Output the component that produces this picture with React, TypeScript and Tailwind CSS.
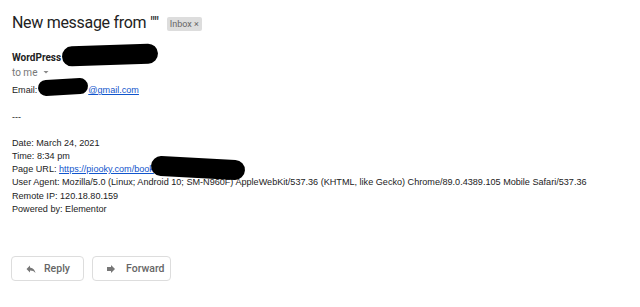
const Blot = ({ className }: { className: string }) => (
  <span className={`absolute bg-black rounded-full ${className}`} />
);

const App = () => {
  return (
    <div className="w-[640px] h-[307px] bg-white pl-[12px] pt-[11px] text-[#222]" style={{ fontFamily: 'Roboto, "Liberation Sans", sans-serif' }}>
      <div className="flex items-center h-[24px] gap-[8px]">
        <h1 className="text-[16px] tracking-[-0.3px] leading-[24px] text-[#222]">New message from ""</h1>
        <span className="bg-[#ddd] rounded-[2px] px-[3px] h-[14px] leading-[14px] text-[9px] text-[#666] mt-[1px]">
          Inbox <span className="text-[#666]">×</span>
        </span>
      </div>

      <div className="mt-[15px] relative h-[14px] flex items-center">
        <span className="text-[10px] font-bold text-[#222]">WordPress</span>
        <Blot className="left-[50px] top-[-5px] w-[96px] h-[20px] -rotate-2" />
      </div>
      <div className="mt-[1px] h-[14px] flex items-center text-[10px] text-[#777]">
        to me
        <svg width="8" height="8" viewBox="0 0 8 8" className="ml-[5px]">
          <path d="M1.5 3h5L4 5.5z" fill="#888" />
        </svg>
      </div>

      <div className="font-['Liberation_Sans',Arial,sans-serif] text-[9.1px] leading-[13.3px] text-[#222]">
        <div className="mt-[5px] relative">
          Email:
          <span className="inline-block w-[51px]" />
          <a className="text-[#15c] underline">@gmail.com</a>
          <Blot className="left-[26px] top-[-5px] w-[50px] h-[16px] -rotate-3" />
        </div>
        <div className="mt-[14px]">---</div>
        <div className="mt-[12px]">Date: March 24, 2021</div>
        <div>Time: 8:34 pm</div>
        <div>
          Page URL:{' '}
          <span className="relative">
            <a className="text-[#15c] underline">https://piooky.com/book</a>
            <Blot className="left-[92px] top-[-6px] w-[94px] h-[20px] rotate-3" />
          </span>
        </div>
        <div>User Agent: Mozilla/5.0 (Linux; Android 10; SM-N960F) AppleWebKit/537.36 (KHTML, like Gecko) Chrome/89.0.4389.105 Mobile Safari/537.36</div>
        <div>Remote IP: 120.18.80.159</div>
        <div>Powered by: Elementor</div>
      </div>

      <div className="flex gap-[8px] mt-[40px] ml-[-1px]">
        <button className="flex items-center h-[25px] w-[73px] border border-[#ddd] rounded-[4px] pl-[13px] text-[10.5px] font-medium text-[#666] bg-white">
          <svg width="12" height="12" viewBox="0 0 24 24" className="mr-[7px]">
            <path d="M10 9V5l-7 7 7 7v-4.1c5 0 8.5 1.6 11 5.1-1-5-4-10-11-11z" fill="#777" />
          </svg>
          Reply
        </button>
        <button className="flex items-center h-[25px] w-[79px] border border-[#ddd] rounded-[4px] pl-[12px] text-[10.5px] font-medium text-[#666] bg-white">
          <svg width="12" height="12" viewBox="0 0 24 24" className="mr-[9px]">
            <path d="M12 8V4l8 8-8 8v-4H4V8z" fill="#777" />
          </svg>
          Forward
        </button>
      </div>
    </div>
  );
};

export default App;
